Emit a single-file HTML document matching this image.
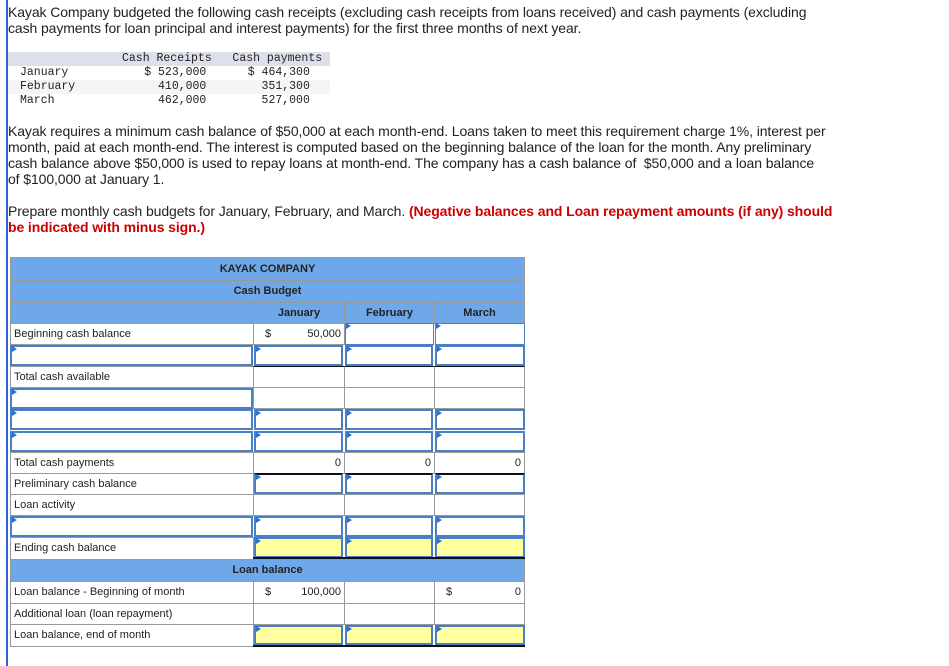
<!DOCTYPE html>
<html><head><meta charset="utf-8">
<style>
html,body{margin:0;padding:0;background:#fff;width:949px;height:666px;overflow:hidden;position:relative}
body{font-family:"Liberation Sans",Arial,sans-serif;color:#222}
.bar{position:absolute;left:6px;top:0;width:2px;height:666px;background:#2a62d6}
.p{position:absolute;left:8px;font-size:14px;line-height:16px;white-space:nowrap;letter-spacing:-0.1px}
.red{color:#c00;font-weight:bold}
.mono{position:absolute;font-family:"Liberation Mono",monospace;font-size:11.5px;line-height:14px;white-space:pre;color:#222}
.c{position:absolute;box-sizing:border-box;border:1px solid #999;background:#fff;font-size:11px;line-height:20px;padding:0 3px;white-space:nowrap}
.hd{background:#6fa8e8;font-weight:bold;text-align:center;font-size:11px}
.in{position:absolute;box-sizing:border-box;border:2px solid #4a7fc4;background:#fff}
.in::before{content:"";position:absolute;left:0;top:0;border-left:5px solid #2a6fd6;border-top:3px solid transparent;border-bottom:3px solid transparent;margin-top:-1px}
.y{background:#ffffa0}
.r{text-align:right}
</style></head><body>
<div class="bar"></div>
<div class="p" style="top:4px">Kayak Company budgeted the following cash receipts (excluding cash receipts from loans received) and cash payments (excluding<br>cash payments for loan principal and interest payments) for the first three months of next year.</div>

<div style="position:absolute;left:8px;top:52px;width:322px;height:14px;background:#dde0ea"></div>
<div style="position:absolute;left:8px;top:80px;width:322px;height:14px;background:#f5f5f5"></div>
<div class="mono" style="left:122px;top:52px">Cash Receipts   Cash payments</div>
<div class="mono" style="left:20px;top:66px">January           $ 523,000      $ 464,300
February            410,000        351,300
March               462,000        527,000</div>

<div class="p" style="top:123px">Kayak requires a minimum cash balance of $50,000 at each month-end. Loans taken to meet this requirement charge 1%, interest per<br>month, paid at each month-end. The interest is computed based on the beginning balance of the loan for the month. Any preliminary<br>cash balance above $50,000 is used to repay loans at month-end. The company has a cash balance of&nbsp; $50,000 and a loan balance<br>of $100,000 at January 1.</div>
<div class="p" style="top:203px">Prepare monthly cash budgets for January, February, and March. <span class="red">(Negative balances and Loan repayment amounts (if any) should<br>be indicated with minus sign.)</span></div>

<div class="c hd" style="left:10px;top:257px;width:515px;height:24px;line-height:22px">KAYAK COMPANY</div>
<div class="c hd" style="left:10px;top:280px;width:515px;height:23px;line-height:21px">Cash Budget</div>
<div class="c hd" style="left:10px;top:302px;width:244px;height:22px"></div>
<div class="c hd" style="left:253px;top:302px;width:92px;height:22px">January</div>
<div class="c hd" style="left:344px;top:302px;width:91px;height:22px">February</div>
<div class="c hd" style="left:434px;top:302px;width:91px;height:22px">March</div>

<div class="c" style="left:10px;top:323px;width:244px;height:22px">Beginning cash balance</div>
<div class="c" style="left:253px;top:323px;width:92px;height:22px"><span style="position:absolute;left:11px">$</span><span style="position:absolute;right:3px">50,000</span></div>
<div class="in" style="left:345px;top:323px;width:89px;height:22px;border-width:1px"></div>
<div class="in" style="left:435px;top:323px;width:90px;height:22px;border-width:1px"></div>
<div class="in" style="left:10px;top:345px;width:243px;height:21px"></div>
<div class="in" style="left:254px;top:345px;width:89px;height:21px"></div>
<div class="in" style="left:345px;top:345px;width:88px;height:21px"></div>
<div class="in" style="left:435px;top:345px;width:90px;height:21px"></div>
<div class="c" style="left:10px;top:366px;width:244px;height:22px">Total cash available</div>
<div class="c" style="left:253px;top:366px;width:92px;height:22px;border-top:1px solid #111"></div>
<div class="c" style="left:344px;top:366px;width:91px;height:22px;border-top:1px solid #111"></div>
<div class="c" style="left:434px;top:366px;width:91px;height:22px;border-top:1px solid #111"></div>
<div class="in" style="left:10px;top:388px;width:243px;height:21px"></div>
<div class="c" style="left:253px;top:387px;width:92px;height:22px"></div>
<div class="c" style="left:344px;top:387px;width:91px;height:22px"></div>
<div class="c" style="left:434px;top:387px;width:91px;height:22px"></div>
<div class="in" style="left:10px;top:409px;width:243px;height:21px"></div>
<div class="in" style="left:254px;top:409px;width:89px;height:21px"></div>
<div class="in" style="left:345px;top:409px;width:88px;height:21px"></div>
<div class="in" style="left:435px;top:409px;width:90px;height:21px"></div>
<div class="in" style="left:10px;top:431px;width:243px;height:21px"></div>
<div class="in" style="left:254px;top:431px;width:89px;height:21px"></div>
<div class="in" style="left:345px;top:431px;width:88px;height:21px"></div>
<div class="in" style="left:435px;top:431px;width:90px;height:21px"></div>
<div class="c" style="left:10px;top:452px;width:244px;height:22px">Total cash payments</div>
<div class="c r" style="left:253px;top:452px;width:92px;height:22px">0</div>
<div class="c r" style="left:344px;top:452px;width:91px;height:22px">0</div>
<div class="c r" style="left:434px;top:452px;width:91px;height:22px">0</div>
<div class="c" style="left:10px;top:473px;width:244px;height:22px">Preliminary cash balance</div>
<div class="in" style="left:254px;top:473px;width:89px;height:21px;border-top-color:#111"></div>
<div class="in" style="left:345px;top:473px;width:88px;height:21px;border-top-color:#111"></div>
<div class="in" style="left:435px;top:473px;width:90px;height:21px;border-top-color:#111"></div>
<div class="c" style="left:10px;top:494px;width:244px;height:22px">Loan activity</div>
<div class="c" style="left:253px;top:494px;width:92px;height:22px"></div>
<div class="c" style="left:344px;top:494px;width:91px;height:22px"></div>
<div class="c" style="left:434px;top:494px;width:91px;height:22px"></div>
<div class="in" style="left:10px;top:516px;width:243px;height:21px"></div>
<div class="in" style="left:254px;top:516px;width:89px;height:21px"></div>
<div class="in" style="left:345px;top:516px;width:88px;height:21px"></div>
<div class="in" style="left:435px;top:516px;width:90px;height:21px"></div>
<div class="c" style="left:10px;top:537px;width:244px;height:23px">Ending cash balance</div>
<div class="in y" style="left:254px;top:537px;width:89px;height:21px"></div>
<div class="in y" style="left:345px;top:537px;width:88px;height:21px"></div>
<div class="in y" style="left:435px;top:537px;width:90px;height:21px"></div>
<div style="position:absolute;left:253px;top:557px;width:272px;height:2px;background:#111"></div>
<div class="c hd" style="left:10px;top:559px;width:515px;height:23px">Loan balance</div>
<div class="c" style="left:10px;top:581px;width:244px;height:23px">Loan balance - Beginning of month</div>
<div class="c" style="left:253px;top:581px;width:92px;height:23px"><span style="position:absolute;left:11px">$</span><span style="position:absolute;right:3px">100,000</span></div>
<div class="c" style="left:344px;top:581px;width:91px;height:23px"></div>
<div class="c" style="left:434px;top:581px;width:91px;height:23px"><span style="position:absolute;left:11px">$</span><span style="position:absolute;right:3px">0</span></div>
<div class="c" style="left:10px;top:603px;width:244px;height:22px">Additional loan (loan repayment)</div>
<div class="c" style="left:253px;top:603px;width:92px;height:22px"></div>
<div class="c" style="left:344px;top:603px;width:91px;height:22px"></div>
<div class="c" style="left:434px;top:603px;width:91px;height:22px"></div>
<div class="c" style="left:10px;top:624px;width:244px;height:23px">Loan balance, end of month</div>
<div class="in y" style="left:254px;top:625px;width:89px;height:20px"></div>
<div class="in y" style="left:345px;top:625px;width:88px;height:20px"></div>
<div class="in y" style="left:435px;top:625px;width:90px;height:20px"></div>
<div style="position:absolute;left:253px;top:645px;width:272px;height:2px;background:#111"></div>
</body></html>
